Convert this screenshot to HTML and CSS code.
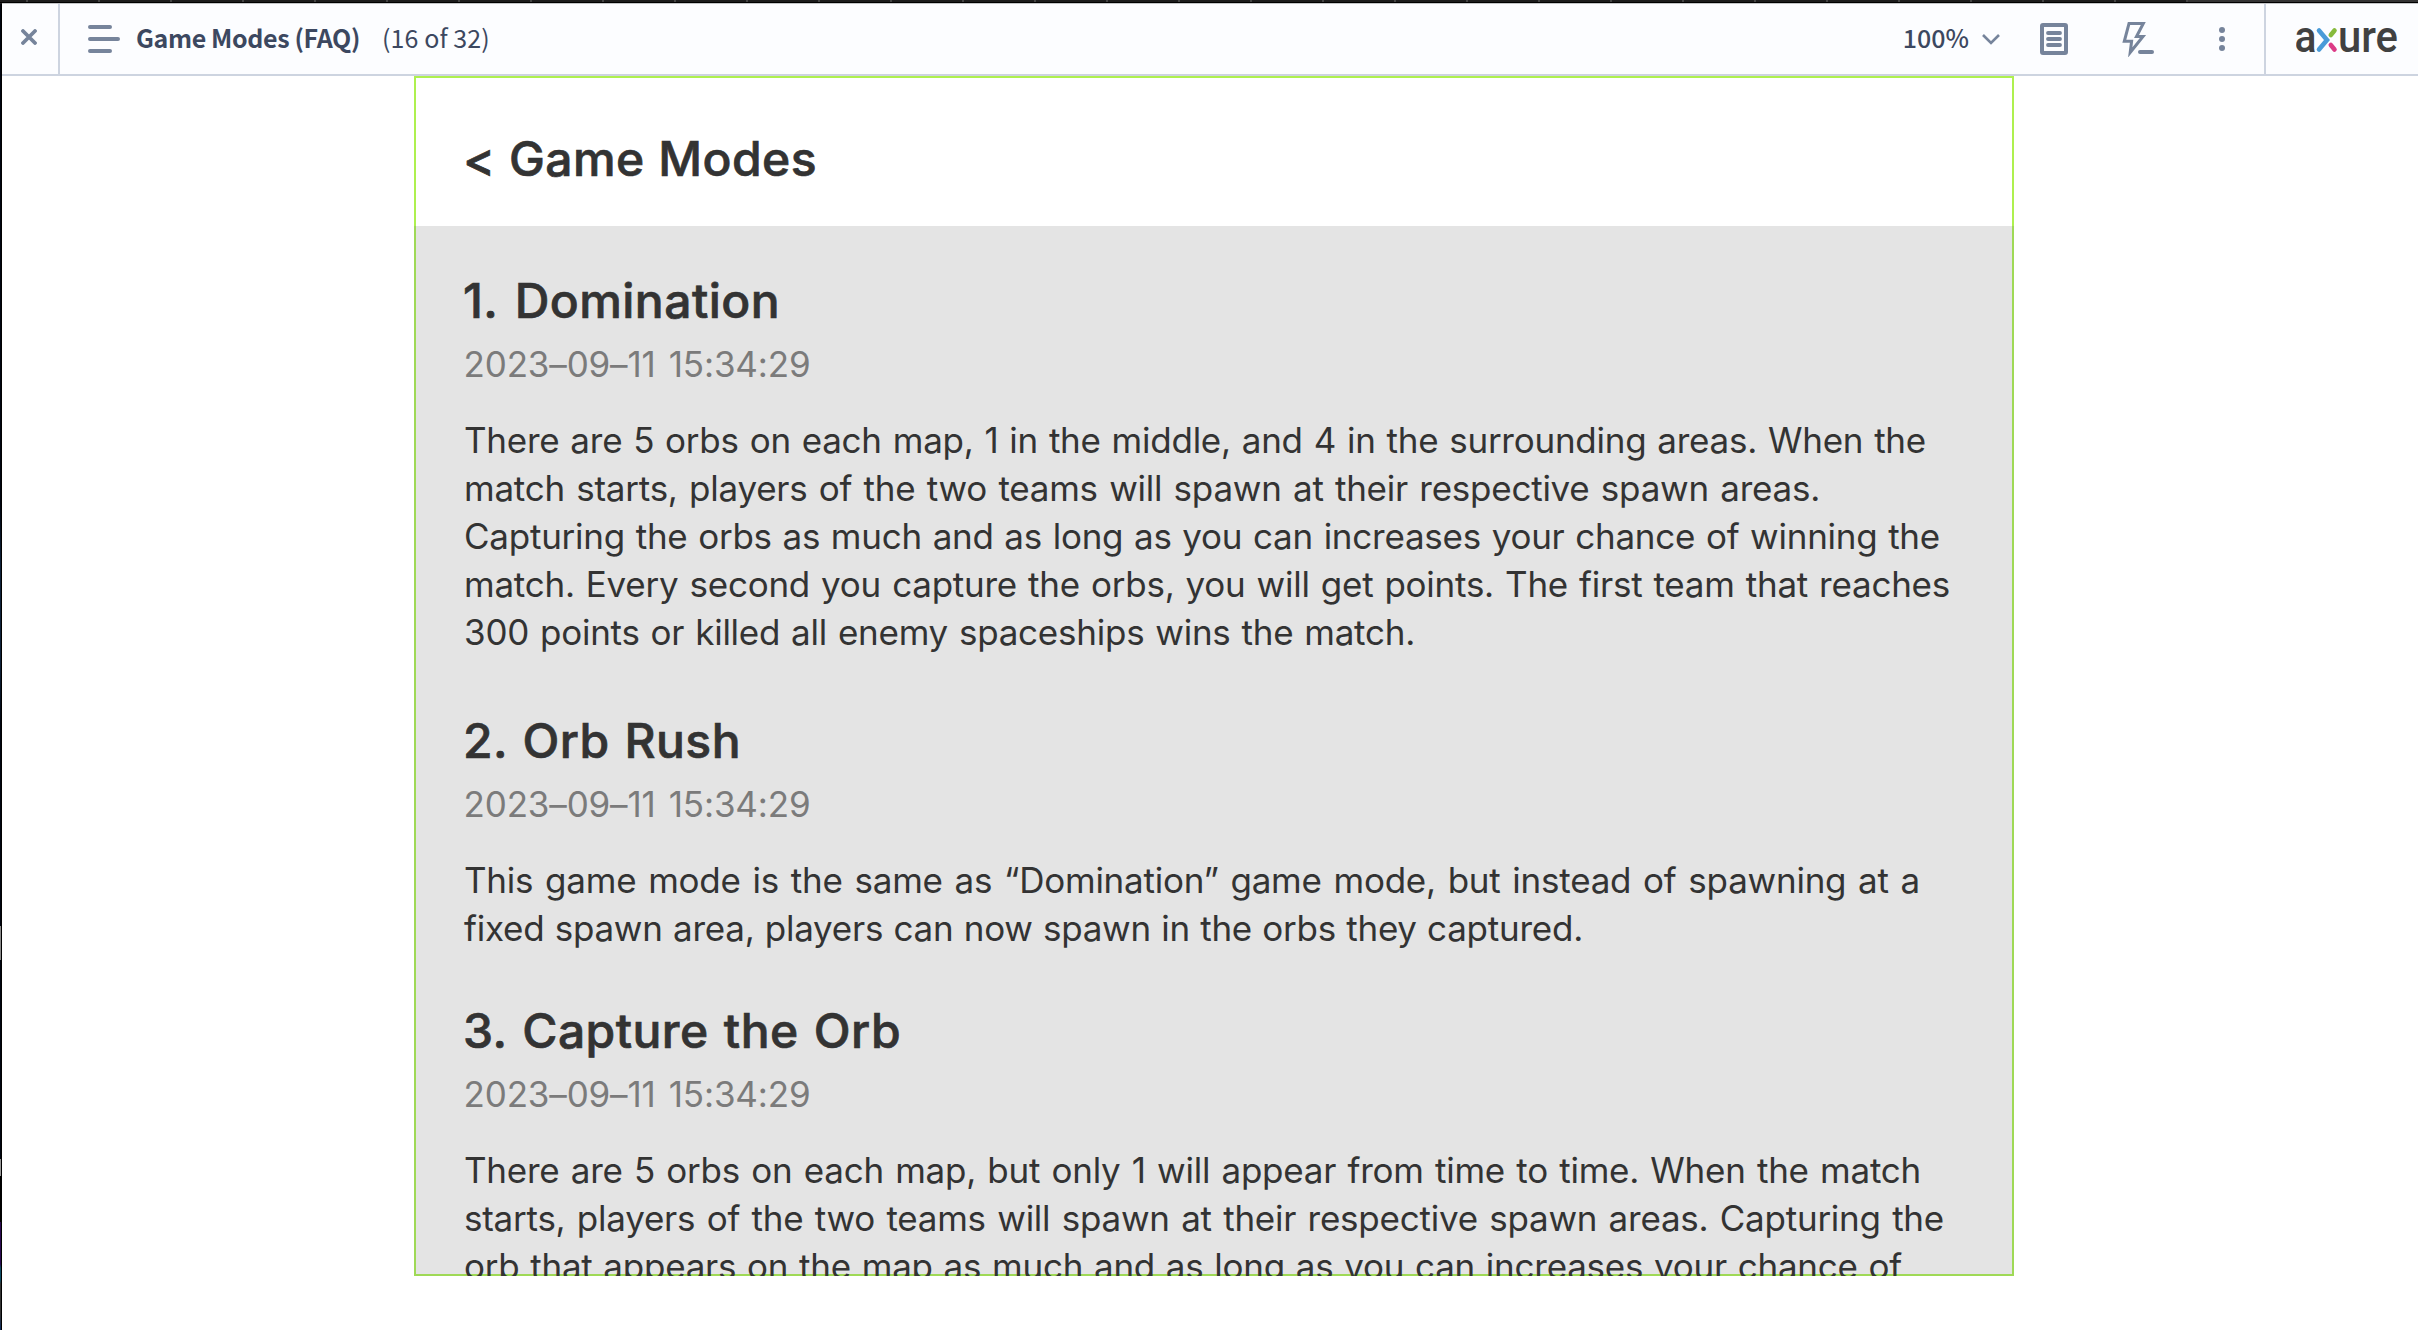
FILE: index.html
```html
<!DOCTYPE html>
<html lang="en">
<head>
<meta charset="utf-8">
<title>Game Modes (FAQ)</title>
<link rel="stylesheet" href="styles.css">
</head>
<body>
<div class="window-top"></div>
<div class="window">
  <div class="window-edge"></div>
  <div class="player">
    <header class="toolbar">
      <button class="close" aria-label="Close">
        <svg width="16" height="16" viewBox="0 0 16 16"><path d="M2 2 14 14M14 2 2 14" stroke-width="3.8"/></svg>
      </button>
      <svg class="menu" width="32" height="28" viewBox="0 0 32 28"><path d="M2 2H22M2 14H30M2 26H22" stroke-width="4"/></svg>
      <span class="page-name">Game Modes (FAQ)</span>
      <span class="page-count">(16 of 32)</span>
      <div class="tools">
        <span class="zoom">100%</span>
        <svg class="chevron" width="20" height="12" viewBox="0 0 20 12"><path d="M2 2 10 10 18 2" stroke-width="2.6" stroke-linecap="butt"/></svg>
        <svg class="notes" width="28" height="32" viewBox="0 0 28 32"><rect x="2" y="2" width="24" height="28" rx="1" stroke-width="4"/><path d="M8 10H20M8 16H20M8 22H20" stroke-width="3.8"/></svg>
        <svg class="console" width="32" height="36" viewBox="0 0 32 36"><path d="M7 2.5H21.3L14.5 15.5H21L8.2 31.5 9.6 20.3H2.3Z" stroke-width="3"/><path d="M18 31H30" stroke-width="4"/></svg>
        <svg class="more" width="6" height="24" viewBox="0 0 6 24"><g fill="#76849b" stroke="none"><circle cx="3" cy="3" r="3"/><circle cx="3" cy="12" r="3"/><circle cx="3" cy="21" r="3"/></g></svg>
      </div>
      <div class="brand">
        <svg class="logo" width="104" height="60" viewBox="0 -12 104 60">
          <text x="-1.5" y="30" textLength="22" lengthAdjust="spacingAndGlyphs">a</text>
          <path d="M23 8.5 31 18 23 27.5" stroke="#4a9bd8" stroke-width="4.6"/>
          <path d="M38.5 8.5 34.8 13" stroke="#86ba3c" stroke-width="4.6"/>
          <path d="M38.5 27.5 34.8 23" stroke="#dc3a86" stroke-width="4.6"/>
          <text x="42" y="30" textLength="60" lengthAdjust="spacingAndGlyphs">ure</text>
        </svg>
      </div>
    </header>
    <main class="stage">
      <div class="screen">
        <div class="screen-head"><h1 class="title line w353">&lt; Game Modes</h1></div>
        <div class="screen-body">
          <article class="mode">
            <h2 class="title line w317">1. Domination</h2>
            <div class="date line">2023–09–11 15:34:29</div>
            <p class="copy">
              <span class="line w1462">There are 5 orbs on each map, 1 in the middle, and 4 in the surrounding areas. When the</span>
              <span class="line w1356">match starts, players of the two teams will spawn at their respective spawn areas.</span>
              <span class="line w1476">Capturing the orbs as much and as long as you can increases your chance of winning the</span>
              <span class="line w1486">match. Every second you capture the orbs, you will get points. The first team that reaches</span>
              <span class="line w951">300 points or killed all enemy spaceships wins the match.</span>
            </p>
          </article>
          <article class="mode tight">
            <h2 class="title line w278">2. Orb Rush</h2>
            <div class="date line">2023–09–11 15:34:29</div>
            <p class="copy">
              <span class="line w1456">This game mode is the same as “Domination” game mode, but instead of spawning at a</span>
              <span class="line w1119">fixed spawn area, players can now spawn in the orbs they captured.</span>
            </p>
          </article>
          <article class="mode">
            <h2 class="title line w438">3. Capture the Orb</h2>
            <div class="date line">2023–09–11 15:34:29</div>
            <p class="copy">
              <span class="line w1457">There are 5 orbs on each map, but only 1 will appear from time to time. When the match</span>
              <span class="line w1480">starts, players of the two teams will spawn at their respective spawn areas. Capturing the</span>
              <span class="line w1438">orb that appears on the map as much and as long as you can increases your chance of</span>
            </p>
          </article>
        </div>
      </div>
    </main>
  </div>
</div>
</body>
</html>
```
FILE: styles.css
```css
* { box-sizing: border-box; }

body {
  margin: 0;
  height: 1330px;
  display: flex;
  flex-direction: column;
  overflow: hidden;
  background: #fff;
  color: #333;
  font-family: Inter, "Liberation Sans", sans-serif;
}

/* sliver of the browser window around the player */
.window-top {
  flex: none;
  height: 4px;
  background:
    linear-gradient(#000, #000) 0 2px / 100% 1px no-repeat,
    linear-gradient(#c4c6c8, #c4c6c8) 2px 3px / 100% 1px no-repeat,
    linear-gradient(#333, #333) 2188px 0 / 230px 2px no-repeat,
    repeating-linear-gradient(90deg, #444 0 2px, #1c1c1c 2px 72px) 26px 0;
}

.window { flex: 1; display: flex; min-height: 0; }

.window-edge {
  flex: none;
  width: 2px;
  background:
    linear-gradient(#000510 0 500px, #0d2038 560px 660px, #000510 720px 922px, #8a8a8a 922px 956px, #000510 956px 1155px, #999 1155px 1172px, #000 1172px 1218px, #2a0a50 1218px 1260px, #0c4a62 1264px 1276px, #333 1280px 1310px, #0a2a60) 0 0 / 1px 100% no-repeat,
    #000;
}

.player { flex: 1; display: flex; flex-direction: column; min-width: 0; }

.toolbar {
  flex: none;
  height: 72px;
  display: flex;
  align-items: center;
  background: #fcfdff;
  border-bottom: 2px solid #cdd4e0;
  color: #3c4860;
  font: 400 25px/36px "Noto Sans CJK SC", "Noto Sans", sans-serif;
  white-space: nowrap;
}

.toolbar svg {
  flex: none;
  display: block;
  fill: none;
  stroke: #76849b;
  stroke-linecap: round;
}

.close {
  width: 58px;
  height: 100%;
  padding: 0 0 4px 19px;
  border: 0;
  border-right: 2px solid #cdd4e0;
  background: none;
}

.page-name, .page-count, .zoom { padding-bottom: 4px; }
.menu { margin-left: 28px; }
.page-name { margin-left: 16px; font-weight: 700; letter-spacing: -0.38px; }
.page-count { margin-left: 22px; letter-spacing: 0.1px; }
.tools { margin-left: auto; display: flex; align-items: center; }
.zoom { font-weight: 500; }
.chevron { margin-left: 12px; }
.notes { margin-left: 39px; }
.console { margin-left: 54px; }
.more { margin-left: 65px; }

.brand {
  width: 154px;
  height: 100%;
  margin-left: 39px;
  padding-left: 30px;
  display: flex;
  align-items: center;
  border-left: 2px solid #cdd4e0;
}

.toolbar .logo { margin-top: 1px; }

.toolbar .logo text {
  fill: #414141;
  stroke: none;
  font: 500 44px Roboto, sans-serif;
}

.stage { flex: 1; min-height: 0; padding-left: 412px; }

.screen {
  width: 1600px;
  height: 1200px;
  overflow: hidden;
  display: flex;
  flex-direction: column;
}

.screen-head {
  flex: none;
  height: 150px;
  padding: 53px 49px 0;
  box-shadow: inset 2px 0 #aef04f, inset -2px 0 #aef04f, inset 0 2px #aef04f;
}

.screen-body {
  flex: none;
  height: 1050px;
  padding: 45px 49px 0;
  background: #e4e4e4;
  box-shadow: inset 2px 0 #9fd956, inset -2px 0 #9fd956, inset 0 -2px #9fd956;
}

.line {
  display: block;
  white-space: nowrap;
  text-align: justify;
  text-align-last: justify;
}

.title {
  margin: 0;
  font-size: 48px;
  line-height: 60px;
  font-weight: 500;
  letter-spacing: 0.45px;
  -webkit-text-stroke: 0.7px #333;
}
.date { width: 347px; margin: 9px 0 0 0.5px; font-size: 35px; line-height: 48px; letter-spacing: -0.15px; color: #7b7b7b; }
.copy { margin: 28px 0 0 1px; font-size: 35px; line-height: 48px; letter-spacing: -0.24px; }
.mode { margin-bottom: 55px; }
.mode.tight { margin-bottom: 49px; }

/* measured line widths */
.w278 { width: 278px; }
.w317 { width: 317px; }
.w353 { width: 354px; }
.w438 { width: 438px; }
.w951 { width: 951px; }
.w1119 { width: 1119px; }
.w1356 { width: 1356px; }
.w1438 { width: 1438px; }
.w1456 { width: 1456px; }
.w1457 { width: 1457px; }
.w1462 { width: 1462px; }
.w1476 { width: 1476px; }
.w1480 { width: 1480px; }
.w1486 { width: 1486px; }
```
